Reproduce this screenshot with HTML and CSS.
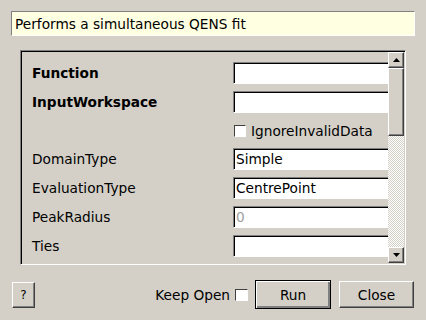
FILE: index.html
```html
<!DOCTYPE html>
<html lang="en">
<head>
  <meta charset="UTF-8">
  <title>Algorithm Dialog</title>
  <link rel="stylesheet" href="styles.css">
</head>
<body>
  <div class="dialog">
    <!-- Description -->
    <div class="desc">Performs a simultaneous QENS fit</div>

    <!-- Properties -->
    <div class="panel">
      <div class="rows">
        <div class="row">
          <span class="label bold">Function</span>
          <span class="field"></span>
        </div>
        <div class="row">
          <span class="label bold">InputWorkspace</span>
          <span class="field"></span>
        </div>
        <div class="row">
          <span class="label"></span>
          <span class="check small"></span>
          <span class="check-text">IgnoreInvalidData</span>
        </div>
        <div class="row">
          <span class="label">DomainType</span>
          <span class="field">Simple</span>
        </div>
        <div class="row">
          <span class="label">EvaluationType</span>
          <span class="field">CentrePoint</span>
        </div>
        <div class="row">
          <span class="label">PeakRadius</span>
          <span class="field muted">0</span>
        </div>
        <div class="row">
          <span class="label">Ties</span>
          <span class="field"></span>
        </div>
      </div>

      <div class="scrollbar">
        <div class="sb-btn">
          <svg width="7" height="4" viewBox="0 0 7 4"><polygon points="3.5,0 7,4 0,4" fill="#000"/></svg>
        </div>
        <div class="sb-thumb"></div>
        <div class="sb-track"></div>
        <div class="sb-btn">
          <svg width="7" height="4" viewBox="0 0 7 4"><polygon points="0,0 7,0 3.5,4" fill="#000"/></svg>
        </div>
      </div>
    </div>

    <!-- Buttons -->
    <div class="footer">
      <button class="btn help">?</button>
      <span class="spacer"></span>
      <span class="keep">Keep Open</span>
      <span class="check keep-box"></span>
      <button class="btn run">Run</button>
      <button class="btn close">Close</button>
    </div>
  </div>
</body>
</html>
```

FILE: styles.css
```css
* {
  margin: 0;
  padding: 0;
  box-sizing: border-box;
}

body {
  width: 426px;
  height: 320px;
  background: #d4d0c8;
  font-family: "DejaVu Sans", sans-serif;
  font-size: 13.7px;
  color: #000;
  overflow: hidden;
}

.dialog {
  display: flex;
  flex-direction: column;
  padding: 11px 11px 0 11px;
}

/* Beschreibung */
.desc {
  height: 25px;
  display: flex;
  align-items: center;
  padding-left: 3px;
  background: #ffffe1;
  border: 1px solid;
  border-color: #808080 #fff #fff #808080;
}

/* Eigenschaften */
.panel {
  margin-top: 14px;
  margin-left: 9px;
  width: 386px;
  height: 215px;
  display: flex;
  padding: 1px;
  border: 1px solid;
  border-color: #808080 #fff #fff #808080;
  box-shadow: inset 1px 1px 0 #000;
}

.rows {
  flex: 1;
  overflow: hidden;
  display: flex;
  flex-direction: column;
  gap: 6.8px;
  padding: 10px 0 0 10px;
}

.row {
  height: 22px;
  display: flex;
  align-items: center;
  flex-shrink: 0;
}

.label {
  width: 201px;
  flex-shrink: 0;
}

.bold {
  font-weight: bold;
}

.field {
  width: 170px;
  height: 22px;
  flex-shrink: 0;
  display: flex;
  align-items: center;
  padding-left: 2px;
  background: #fff;
  border: 1px solid;
  border-color: #808080 #fff #fff #808080;
  box-shadow: inset 1px 1px 0 #000;
}

.muted {
  color: #a0a0a0;
}

.check {
  display: inline-block;
  width: 12px;
  height: 12px;
  background: #fff;
  border: 1px solid;
  border-color: #404040 #fff #fff #404040;
}

.check.small {
  margin-left: 1px;
}

.check-text {
  margin-left: 5px;
}

/* Scrollbalken */
.scrollbar {
  width: 16px;
  display: flex;
  flex-direction: column;
}

.sb-btn {
  height: 16px;
  display: flex;
  align-items: center;
  justify-content: center;
  background: #d4d0c8;
  border: 1px solid;
  border-color: #fff #404040 #404040 #fff;
  box-shadow: inset -1px -1px 0 #808080;
}

.sb-thumb {
  height: 68px;
  background: #d4d0c8;
  border: 1px solid;
  border-color: #fff #404040 #404040 #fff;
  box-shadow: inset -1px -1px 0 #808080;
}

.sb-track {
  flex: 1;
  background-color: #d4d0c8;
  background-image: conic-gradient(#fff 25%, transparent 0 50%, #fff 0 75%, transparent 0);
  background-size: 2px 2px;
}

/* Knöpfe */
.footer {
  margin-top: 15px;
  display: flex;
  align-items: center;
}

.spacer {
  flex: 1;
}

.btn {
  font-family: "DejaVu Sans", sans-serif;
  font-size: 13.7px;
  color: #000;
  background: #d4d0c8;
  border: 1px solid;
  border-color: #fff #404040 #404040 #fff;
  box-shadow: inset -1px -1px 0 #808080;
}

.help {
  margin-left: 1px;
  width: 23px;
  height: 26px;
  font-size: 12px;
}

.keep-box {
  width: 13px;
  margin-left: 5px;
}

.run {
  margin-left: 7px;
  width: 76px;
  height: 29px;
  border-color: #000;
  box-shadow: inset 1px 1px 0 #fff, inset -2px -2px 0 #808080;
}

.close {
  margin-left: 8px;
  margin-right: 1px;
  width: 75px;
  height: 27px;
}
```
